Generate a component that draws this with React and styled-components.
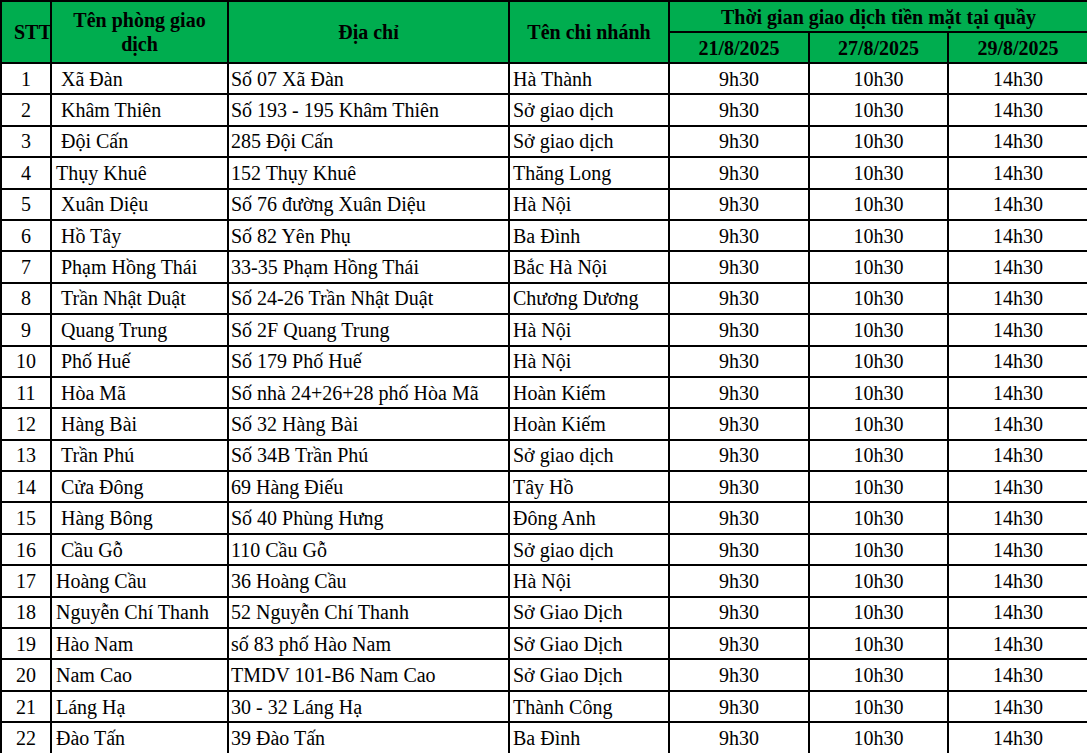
import React from "react";
import styled, { createGlobalStyle } from "styled-components";

const rows = [
  ["Xã Đàn", "Số 07 Xã Đàn", "Hà Thành", true],
  ["Khâm Thiên", "Số 193 - 195 Khâm Thiên", "Sở giao dịch", true],
  ["Đội Cấn", "285 Đội Cấn", "Sở giao dịch", true],
  ["Thụy Khuê", "152 Thụy Khuê", "Thăng Long", false],
  ["Xuân Diệu", "Số 76 đường Xuân Diệu", "Hà Nội", true],
  ["Hồ Tây", "Số 82 Yên Phụ", "Ba Đình", true],
  ["Phạm Hồng Thái", "33-35 Phạm Hồng Thái", "Bắc Hà Nội", true],
  ["Trần Nhật Duật", "Số 24-26 Trần Nhật Duật", "Chương Dương", true],
  ["Quang Trung", "Số 2F Quang Trung", "Hà Nội", true],
  ["Phố Huế", "Số 179 Phố Huế", "Hà Nội", true],
  ["Hòa Mã", "Số nhà 24+26+28 phố Hòa Mã", "Hoàn Kiếm", true],
  ["Hàng Bài", "Số 32 Hàng Bài", "Hoàn Kiếm", true],
  ["Trần Phú", "Số 34B Trần Phú", "Sở giao dịch", true],
  ["Cửa Đông", "69 Hàng Điếu", "Tây Hồ", true],
  ["Hàng Bông", "Số 40 Phùng Hưng", "Đông Anh", true],
  ["Cầu Gỗ", "110 Cầu Gỗ", "Sở giao dịch", true],
  ["Hoàng Cầu", "36 Hoàng Cầu", "Hà Nội", false],
  ["Nguyễn Chí Thanh", "52 Nguyễn Chí Thanh", "Sở Giao Dịch", false],
  ["Hào Nam", "số 83 phố Hào Nam", "Sở Giao Dịch", false],
  ["Nam Cao", "TMDV 101-B6 Nam Cao", "Sở Giao Dịch", false],
  ["Láng Hạ", "30 - 32 Láng Hạ", "Thành Công", false],
  ["Đào Tấn", "39 Đào Tấn", "Ba Đình", false],
];

const dates = ["21/8/2025", "27/8/2025", "29/8/2025"];
const times = ["9h30", "10h30", "14h30"];

const App = () => {
  return (
    <>
      <GlobalStyle />
      <Table>
        <colgroup>
          <col style={{ width: "50px" }} />
          <col style={{ width: "177px" }} />
          <col style={{ width: "281px" }} />
          <col style={{ width: "160px" }} />
          <col style={{ width: "140px" }} />
          <col style={{ width: "139px" }} />
          <col style={{ width: "140px" }} />
        </colgroup>
        <thead>
          <HeadRow>
            <Th rowSpan={2}>STT</Th>
            <Th rowSpan={2}>Tên phòng giao dịch</Th>
            <Th rowSpan={2}>Địa chỉ</Th>
            <Th rowSpan={2}>Tên chi nhánh</Th>
            <Th colSpan={3}>Thời gian giao dịch tiền mặt tại quầy</Th>
          </HeadRow>
          <HeadRow>
            {dates.map((d) => (
              <Th key={d}>{d}</Th>
            ))}
          </HeadRow>
        </thead>
        <tbody>
          {rows.map(([name, addr, branch, indent], i) => (
            <Row key={i}>
              <Td $align="center">{i + 1}</Td>
              <Td $pad={indent ? 9 : 4}>{name}</Td>
              <Td $pad={2}>{addr}</Td>
              <Td $pad={3}>{branch}</Td>
              {times.map((t) => (
                <Td key={t} $align="center">
                  {t}
                </Td>
              ))}
            </Row>
          ))}
        </tbody>
      </Table>
    </>
  );
};

export default App;

const GlobalStyle = createGlobalStyle`
  html, body {
    margin: 0;
    padding: 0;
    background: #ffffff;
    overflow: hidden;
  }
`;

const Table = styled.table`
  width: 1087px;
  table-layout: fixed;
  border-collapse: collapse;
  font-family: "Liberation Serif", "Times New Roman", serif;
  color: #000;
`;

const HeadRow = styled.tr`
  height: 31px;
`;

const Th = styled.th`
  background: #00ad4f;
  color: #000;
  font-size: 20px;
  font-weight: 700;
  line-height: 24px;
  text-align: center;
  vertical-align: middle;
  border: 2px solid #000;
  padding: 0 12px;
`;

const Row = styled.tr`
  height: 31.4px;
`;

const Td = styled.td`
  font-size: 20px;
  line-height: 22px;
  border: 2px solid #000;
  padding: 0 0 0 ${(p) => p.$pad || 0}px;
  text-align: ${(p) => p.$align || "left"};
  white-space: nowrap;
  vertical-align: middle;
`;
